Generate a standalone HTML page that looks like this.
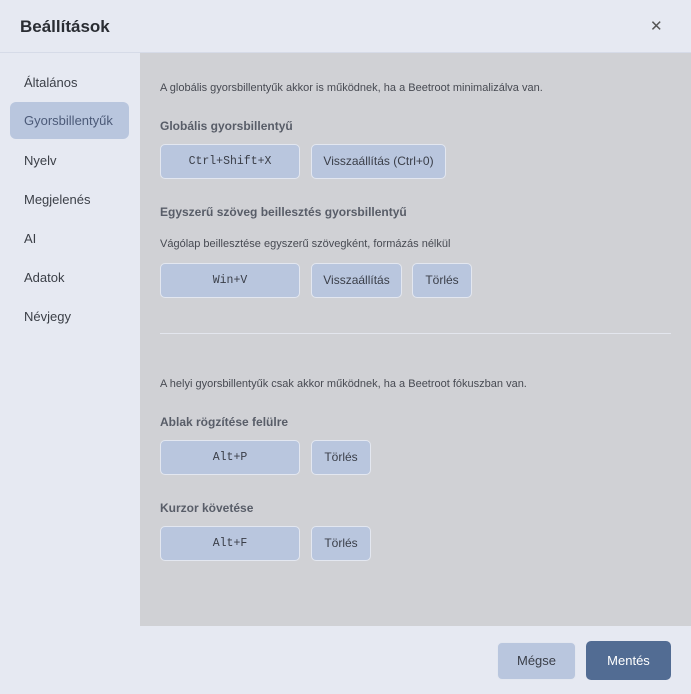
<!DOCTYPE html>
<html><head><meta charset="utf-8"><style>
*{margin:0;padding:0;box-sizing:border-box}
body{width:691px;height:694px;overflow:hidden;font-family:"Liberation Sans",sans-serif;background:#e6e9f2;position:relative;color:#333}
.hdr{position:absolute;left:0;top:0;width:691px;height:53px;border-bottom:1px solid #d6dbe8;background:#e6e9f2}
.hdr h1{position:absolute;left:20px;top:17px;font-size:17px;font-weight:bold;color:#2a2d33}
.x{position:absolute;left:650px;top:17px;font-size:15px;color:#555;font-weight:300;font-family:"DejaVu Sans",sans-serif}
.side{position:absolute;left:0;top:53px;width:140px;height:573px;background:#e6e9f2}
.si{position:absolute;left:10px;width:119px;height:37px;border-radius:6px;font-size:13px;color:#3b3f47;padding-left:14px;line-height:39px}
.si.a{background:#b9c6de;color:#4c5a78;line-height:37px}
.main{position:absolute;left:140px;top:53px;width:551px;height:573px;background:#d0d1d5}
.t{position:absolute;left:160px;font-size:11px;color:#474a52}
.h{position:absolute;left:160px;font-size:12px;font-weight:bold;color:#585d68}
.b{position:absolute;height:35px;background:#b9c6de;border:1px solid #e3e7f0;border-radius:5px;font-size:12px;color:#3a3e48;text-align:center;line-height:33px}
.m{font-family:"Liberation Mono","DejaVu Sans Mono",monospace;font-size:11.5px}
.div{position:absolute;left:160px;top:333px;width:511px;height:1px;background:#e3e6ee}
.ft{position:absolute;left:0;top:626px;width:691px;height:68px;background:#e6e9f2}
</style></head><body>
<div class="hdr"><h1>Beállítások</h1><div class="x">✕</div></div>
<div class="side"></div>
<div class="si" style="top:63px">Általános</div>
<div class="si a" style="top:102px">Gyorsbillentyűk</div>
<div class="si" style="top:141px">Nyelv</div>
<div class="si" style="top:180px">Megjelenés</div>
<div class="si" style="top:219px">AI</div>
<div class="si" style="top:258px">Adatok</div>
<div class="si" style="top:297px">Névjegy</div>
<div class="main"></div>
<div class="t" style="top:82px">A globális gyorsbillentyűk akkor is működnek, ha a Beetroot minimalizálva van.</div>
<div class="h" style="top:119px">Globális gyorsbillentyű</div>
<div class="b m" style="left:160px;top:144px;width:140px">Ctrl+Shift+X</div>
<div class="b" style="left:311px;top:144px;width:135px">Visszaállítás (Ctrl+0)</div>
<div class="h" style="top:205px">Egyszerű szöveg beillesztés gyorsbillentyű</div>
<div class="t" style="top:238px">Vágólap beillesztése egyszerű szövegként, formázás nélkül</div>
<div class="b m" style="left:160px;top:263px;width:140px">Win+V</div>
<div class="b" style="left:311px;top:263px;width:91px">Visszaállítás</div>
<div class="b" style="left:412px;top:263px;width:60px">Törlés</div>
<div class="div"></div>
<div class="t" style="top:378px">A helyi gyorsbillentyűk csak akkor működnek, ha a Beetroot fókuszban van.</div>
<div class="h" style="top:415px">Ablak rögzítése felülre</div>
<div class="b m" style="left:160px;top:440px;width:140px">Alt+P</div>
<div class="b" style="left:311px;top:440px;width:60px">Törlés</div>
<div class="h" style="top:501px">Kurzor követése</div>
<div class="b m" style="left:160px;top:526px;width:140px">Alt+F</div>
<div class="b" style="left:311px;top:526px;width:60px">Törlés</div>
<div class="ft"></div>
<div class="b" style="left:497px;top:642px;width:79px;height:38px;line-height:36px;font-size:13px">Mégse</div>
<div class="b" style="left:586px;top:641px;width:85px;height:39px;line-height:39px;font-size:13px;background:#526c93;border:none;color:#fff">Mentés</div>
</body></html>
